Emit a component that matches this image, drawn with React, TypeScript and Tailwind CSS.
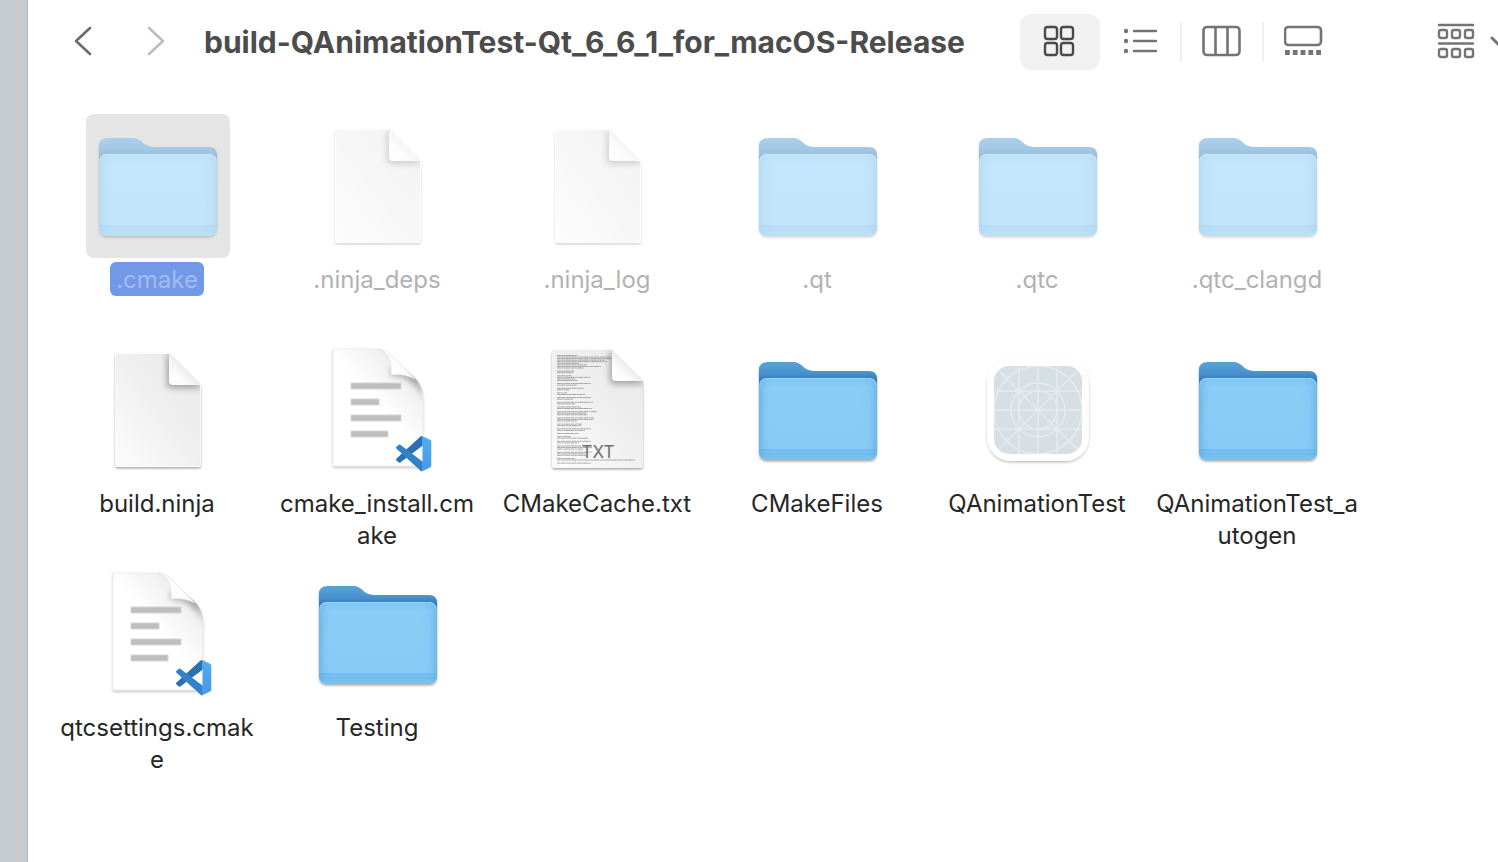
import type { ReactNode } from "react";

type Kind = "folder" | "blank" | "code" | "txt" | "app";

interface FileItem {
  lines: string[];
  kind: Kind;
  hidden?: boolean;
  selected?: boolean;
}

const files: FileItem[] = [
  { lines: [".cmake"], kind: "folder", hidden: true, selected: true },
  { lines: [".ninja_deps"], kind: "blank", hidden: true },
  { lines: [".ninja_log"], kind: "blank", hidden: true },
  { lines: [".qt"], kind: "folder", hidden: true },
  { lines: [".qtc"], kind: "folder", hidden: true },
  { lines: [".qtc_clangd"], kind: "folder", hidden: true },
  { lines: ["build.ninja"], kind: "blank" },
  { lines: ["cmake_install.cm", "ake"], kind: "code" },
  { lines: ["CMakeCache.txt"], kind: "txt" },
  { lines: ["CMakeFiles"], kind: "folder" },
  { lines: ["QAnimationTest"], kind: "app" },
  { lines: ["QAnimationTest_a", "utogen"], kind: "folder" },
  { lines: ["qtcsettings.cmak", "e"], kind: "code" },
  { lines: ["Testing"], kind: "folder" },
];

function Defs() {
  return (
    <svg width="0" height="0" className="absolute" aria-hidden="true">
      <defs>
        <linearGradient id="folderBack" x1="0" y1="23" x2="0" y2="44" gradientUnits="userSpaceOnUse">
          <stop offset="0" stopColor="#5ba3d8" />
          <stop offset="0.5" stopColor="#4b95cf" />
          <stop offset="1" stopColor="#2f78be" />
        </linearGradient>
        <linearGradient id="folderFront" x1="0" y1="0" x2="0" y2="1">
          <stop offset="0" stopColor="#80c4f3" />
          <stop offset="0.12" stopColor="#8acdf7" />
          <stop offset="1" stopColor="#88cbf6" />
        </linearGradient>
        <linearGradient id="folderSide" x1="0" y1="0" x2="1" y2="0">
          <stop offset="0" stopColor="#4f9fdb" stopOpacity="0.5" />
          <stop offset="0.06" stopColor="#6db8ec" stopOpacity="0.2" />
          <stop offset="0.15" stopColor="#8acdf7" stopOpacity="0" />
          <stop offset="0.85" stopColor="#8acdf7" stopOpacity="0" />
          <stop offset="0.94" stopColor="#6db8ec" stopOpacity="0.2" />
          <stop offset="1" stopColor="#4f9fdb" stopOpacity="0.5" />
        </linearGradient>
        <linearGradient id="paper" x1="0.9" y1="0.1" x2="0.1" y2="0.9">
          <stop offset="0" stopColor="#e9e9e9" />
          <stop offset="0.5" stopColor="#f0f0f0" />
          <stop offset="1" stopColor="#fafafa" />
        </linearGradient>
        <linearGradient id="fold" x1="0" y1="1" x2="0.6" y2="0.4">
          <stop offset="0" stopColor="#ffffff" />
          <stop offset="0.5" stopColor="#fbfbfb" />
          <stop offset="1" stopColor="#e6e6e6" />
        </linearGradient>
        <linearGradient id="codePaper" x1="0.75" y1="0" x2="0.4" y2="0.4">
          <stop offset="0" stopColor="#dcdcdc" />
          <stop offset="0.35" stopColor="#f1f1f1" />
          <stop offset="1" stopColor="#ffffff" />
        </linearGradient>
        <linearGradient id="codePanel" x1="0" y1="0" x2="0" y2="1">
          <stop offset="0" stopColor="#4fb0ee" />
          <stop offset="1" stopColor="#4896ea" />
        </linearGradient>
        <filter id="drop" x="-20%" y="-20%" width="140%" height="140%">
          <feDropShadow dx="0" dy="1.5" stdDeviation="1" floodOpacity="0.35" />
        </filter>
        <filter id="faintDrop" x="-20%" y="-20%" width="140%" height="140%">
          <feDropShadow dx="0" dy="1.5" stdDeviation="1.3" floodOpacity="0.25" />
        </filter>
        <filter id="soft" x="-50%" y="-50%" width="200%" height="200%">
          <feGaussianBlur stdDeviation="3" />
        </filter>
        <clipPath id="blankClip">
          <path d="M32 15H83L115 47V126Q115 129 112 129H32Q29 129 29 126V18Q29 15 32 15Z" />
        </clipPath>
        <clipPath id="txtClip">
          <path d="M29 12H86L117 43V127Q117 130 114 130H29Q26 130 26 127V15Q26 12 29 12Z" />
        </clipPath>
        <clipPath id="codeClip">
          <path d="M27 11H70C79 11 84 17 90 23L108 39C114 45 117 51 117 61V128H27Z" />
        </clipPath>
        <clipPath id="appClip">
          <rect x="28" y="28" width="88" height="88" rx="15" />
        </clipPath>
      </defs>
    </svg>
  );
}

function FolderArt() {
  return (
    <g filter="url(#drop)">
      <path
        d="M13 60V32Q13 24 22 24H48C56 24 57 33 68 33H123Q131 33 131 41V60Z"
        fill="url(#folderBack)"
      />
      <rect x="13" y="40" width="118" height="82" rx="8" fill="url(#folderFront)" />
      <rect x="13" y="40" width="118" height="82" rx="8" fill="url(#folderSide)" />
      <path d="M13 111H131V114Q131 122 123 122H21Q13 122 13 114Z" fill="#62b1e6" opacity="0.4" />
      <path d="M13 112H131M13 116H131" stroke="#57a7df" strokeWidth="1" opacity="0.4" />
      <path d="M14 47Q14.500 40.500 21 40.500H123Q129.500 40.500 130 47" fill="none" stroke="#98d3f8" strokeWidth="1" />
    </g>
  );
}

function BlankArt() {
  return (
    <>
      <path
        d="M32 15H83L115 47V126Q115 129 112 129H32Q29 129 29 126V18Q29 15 32 15Z"
        fill="url(#paper)"
        filter="url(#drop)"
      />
      <g clipPath="url(#blankClip)">
        <path d="M81 15V46Q81 50 85 50H117L84 16Z" fill="#777" opacity="0.65" filter="url(#soft)" />
        <path
          d="M32 15.500H83L114.500 47V126Q114.500 128.500 112 128.500H32Q29.500 128.500 29.500 126V18Q29.500 15.500 32 15.500Z"
          fill="none"
          stroke="#fcfcfc"
        />
      </g>
      <path d="M83 15V43Q83 47 87 47H115Z" fill="url(#fold)" />
    </>
  );
}

const txtLines = [
  20, 54, 57, 48, 50, 22, 30, 44, 27, 0, 17, 16, 0, 15, 34, 18, 21, 0, 34, 20, 0, 27, 12, 0, 10, 28, 0,
  34, 16, 0, 36, 18, 0, 24, 35, 0, 40, 29, 30, 0, 37, 36, 20, 0, 25, 24, 0, 34, 28, 0, 22, 0, 14, 31,
  0, 34, 22, 0, 24, 35, 26, 0, 35, 28, 30, 0, 18, 78, 0, 34,
];

function TxtArt() {
  return (
    <>
      <path
        d="M29 12H86L117 43V127Q117 130 114 130H29Q26 130 26 127V15Q26 12 29 12Z"
        fill="url(#paper)"
        filter="url(#drop)"
      />
      <g clipPath="url(#txtClip)">
        {txtLines.map((w, i) => (
          <path
            key={i}
            d={`M31 ${17.5 + i * 1.56}h${w}`}
            stroke="#333"
            strokeWidth="0.800"
            strokeDasharray={i % 2 ? "3 0.400 5 0.500 2 0.300" : "4 0.500 2 0.600 6 0.400"}
            opacity="0.5"
          />
        ))}
        <path d="M84 12V42Q84 46 88 46H119L86 13Z" fill="#777" opacity="0.65" filter="url(#soft)" />
      </g>
      <path d="M86 12V39Q86 43 90 43H117Z" fill="url(#fold)" />
      <text
        x="72"
        y="120"
        textAnchor="middle"
        fontSize="17"
        fill="#6e6e6e"
        className="font-['Inter',sans-serif]"
      >
        TXT
      </text>
    </>
  );
}

function CodeArt() {
  return (
    <>
      <path
        d="M27 11H70C79 11 84 17 90 23L108 39C114 45 117 51 117 61V128H27Z"
        fill="url(#codePaper)"
        stroke="#e2e2e2"
        strokeWidth="0.600"
        filter="url(#faintDrop)"
      />
      <g clipPath="url(#codeClip)">
        <path d="M84 37C98 36 112 44 119 62L112 38L86 30Z" fill="#666" opacity="0.6" filter="url(#soft)" />
      </g>
      <path d="M72 11C82 13 86 24 85 37C93 36 101 37 109 41L90 22C84 16 80 11 72 11Z" fill="#fdfdfd" stroke="#dcdcdc" strokeWidth="0.600" />
      <path d="M45 45h50v6H45zM45 61h28v6H45zM45 77h50v6H45zM45 93h37v6H45z" fill="#bdbfbe" stroke="#d4d5d4" />
      <g transform="translate(90 98) scale(1.470)">
        <path
          d="M18.210.210L23.150 2.587Q24 3 24 3.940V20.060Q24 21 23.150 21.410L18.210 23.790L7 14.870L2.900 18L.3 16V8L2.900 6L7 9.130Z"
          fill="#fff"
          stroke="#fff"
          strokeWidth="1.500"
        />
        <path
          d="M18.200 6.400L2.925 17.998a1 1 0 0 1-1.276-.057L.327 16.740a1 1 0 0 1 0-1.480L16.505.5a1.500 1.500 0 0 1 1.700-.3z"
          fill="#2a70b2"
        />
        <path
          d="M18.200 17.600L2.925 6.002a1 1 0 0 0-1.276.057L.327 7.260a1 1 0 0 0 0 1.480L16.505 23.500a1.500 1.500 0 0 0 1.700.3z"
          fill="#3481cb"
        />
        <path
          d="M16.505.5A1.500 1.500 0 0 1 18.210.210L23.150 2.587A1.500 1.500 0 0 1 24 3.939V20.060a1.500 1.500 0 0 1-.85 1.352L18.210 23.790a1.500 1.500 0 0 1-1.705-.29C17.200 24 18 23.700 18 22.800V1.200C18 .3 17.200 0 16.505.5z"
          fill="url(#codePanel)"
        />
      </g>
    </>
  );
}

function AppArt() {
  return (
    <>
      <rect x="21" y="21" width="102" height="102" rx="24" fill="#fff" filter="url(#faintDrop)" />
      <g clipPath="url(#appClip)">
        <rect x="28" y="28" width="88" height="88" fill="#d5dfe4" />
        <g fill="none" stroke="#e5ebee" strokeWidth="1.500">
          <path d="M53 28V116M72 28V116M91 28V116M28 53H116M28 72H116M28 91H116M28 28L116 116M116 28L28 116" />
          <circle cx="72" cy="72" r="44" />
          <circle cx="72" cy="72" r="27" />
          <circle cx="72" cy="72" r="19" />
        </g>
        <circle cx="72" cy="72" r="2" fill="#e8edf0" />
      </g>
    </>
  );
}

const art: Record<Kind, () => ReactNode> = {
  folder: FolderArt,
  blank: BlankArt,
  code: CodeArt,
  txt: TxtArt,
  app: AppArt,
};

function FileTile({ item }: { item: FileItem }) {
  const Art = art[item.kind];
  return (
    <li className="flex h-56 justify-center">
      <button type="button" className="flex w-full flex-col items-center gap-1">
        <span className={item.selected ? "rounded-lg bg-[#e5e5e5]" : "rounded-lg"}>
          <svg viewBox="0 0 144 144" aria-hidden="true" className="size-36">
            {item.selected && (
              <path d="M13 40V32Q13 24 22 24H48C56 24 57 33 68 33H123Q131 33 131 41V114Q131 122 123 122H21Q13 122 13 114Z" fill="#fff" />
            )}
            <g className={item.hidden ? "opacity-50" : "opacity-100"}>
              <Art />
            </g>
          </svg>
        </span>
        <span
          className={
            item.selected
              ? "mr-0.5 rounded-md bg-[#7298e8] px-1.5 pt-0.5 text-2xl/8 text-[#a3bbf2]"
              : item.hidden
                ? "mr-0.5 px-1.5 pt-0.5 text-2xl/8 text-[#b2b2b2]"
                : "mr-0.5 px-1.5 pt-0.5 text-2xl/8 text-[#262626]"
          }
        >
          {item.lines.map((line) => (
            <span key={line} className="block whitespace-nowrap">
              {line}
            </span>
          ))}
        </span>
      </button>
    </li>
  );
}

function Toolbar() {
  return (
    <header className="flex h-21 items-center pl-[35px]">
      <nav className="flex shrink-0 items-center gap-8" aria-label="History">
        <button type="button" aria-label="Back" className="flex w-10 justify-center text-[#6c6c6c]">
          <svg viewBox="0 1 20 32" className="h-8 w-5" fill="none" stroke="currentColor" strokeWidth="2.600" strokeLinecap="round" strokeLinejoin="round">
            <path d="M17 3L3 16L17 29" />
          </svg>
        </button>
        <button type="button" aria-label="Forward" disabled className="flex w-10 justify-center text-[#bdbdbd]">
          <svg viewBox="0 1 20 32" className="h-8 w-5" fill="none" stroke="currentColor" strokeWidth="2.600" strokeLinecap="round" strokeLinejoin="round">
            <path d="M4 3L18 16L4 29" />
          </svg>
        </button>
      </nav>
      <h1 className="ml-[29px] w-[816px] shrink-0 text-3xl/10 font-bold whitespace-nowrap text-[#4c4c4c]">
        build-QAnimationTest-Qt_6_6_1_for_macOS-Release
      </h1>
      <div className="flex shrink-0 items-center" role="group" aria-label="View">
        <button type="button" aria-label="Icons" aria-pressed="true" className="flex h-14 w-20 items-center justify-center rounded-xl bg-[#f1f1f1]">
          <svg viewBox="1 1 40 40" className="size-10" fill="none" stroke="#4a4a4a" strokeWidth="2.400">
            <rect x="6" y="6" width="12" height="12" rx="2.500" />
            <rect x="22" y="6" width="12" height="12" rx="2.500" />
            <rect x="6" y="22" width="12" height="12" rx="2.500" />
            <rect x="22" y="22" width="12" height="12" rx="2.500" />
          </svg>
        </button>
        <button type="button" aria-label="List" className="flex h-14 w-20 items-center justify-center">
          <svg viewBox="0 1 40 40" className="size-10" fill="none" stroke="#747474" strokeWidth="2.400" strokeLinecap="round">
            <path d="M14 10H36M14 20H36M14 30H36" />
            <g fill="#747474" stroke="none">
              <circle cx="6" cy="10" r="2.200" />
              <circle cx="6" cy="20" r="2.200" />
              <circle cx="6" cy="30" r="2.200" />
            </g>
          </svg>
        </button>
        <span className="h-10 w-0.5 bg-[#efefef]" />
        <button type="button" aria-label="Columns" className="flex h-14 w-20 items-center justify-center">
          <svg viewBox="1 1 40 40" className="size-10" fill="none" stroke="#747474" strokeWidth="2.600">
            <rect x="2.500" y="6" width="36" height="28" rx="3.500" />
            <path d="M14.500 6V34M26.500 6V34" />
          </svg>
        </button>
        <span className="h-10 w-0.5 bg-[#efefef]" />
        <button type="button" aria-label="Gallery" className="flex h-14 w-20 items-center justify-center">
          <svg viewBox="1 1 40 40" className="size-10" fill="none" stroke="#747474" strokeWidth="2.600">
            <rect x="2" y="6" width="36" height="18" rx="3.500" />
            <path d="M2 31.500H38" strokeWidth="5" strokeDasharray="4.800 3" />
          </svg>
        </button>
      </div>
      <button type="button" aria-label="Group items" className="ml-23 flex shrink-0 items-center gap-3">
        <svg viewBox="0 1 40 40" className="size-10" fill="none" stroke="#747474" strokeWidth="2.400" strokeLinecap="round">
          <path d="M3 4H37M3 22.500H37" />
          <rect x="3" y="9" width="8" height="8" rx="2" />
          <rect x="16" y="9" width="8" height="8" rx="2" />
          <rect x="29" y="9" width="8" height="8" rx="2" />
          <rect x="3" y="28" width="8" height="8" rx="2" />
          <rect x="16" y="28" width="8" height="8" rx="2" />
          <rect x="29" y="28" width="8" height="8" rx="2" />
        </svg>
        <svg viewBox="0 0 20 16" className="h-4 w-5" fill="none" stroke="#747474" strokeWidth="3" strokeLinecap="round" strokeLinejoin="round">
          <path d="M4 4L11 11L18 4" />
        </svg>
      </button>
    </header>
  );
}

export default function App() {
  return (
    <div className="flex min-h-screen overflow-hidden bg-white font-['Inter','Liberation_Sans',sans-serif]">
      <Defs />
      <aside className="w-7 shrink-0 border-r border-[#adb4b8] bg-[#c6cccf]" />
      <main className="min-w-0 flex-1">
        <Toolbar />
        <ul className="grid grid-cols-[repeat(auto-fill,220px)] pt-[30px] pl-5">
          {files.map((item) => (
            <FileTile key={item.lines[0]} item={item} />
          ))}
        </ul>
      </main>
    </div>
  );
}
